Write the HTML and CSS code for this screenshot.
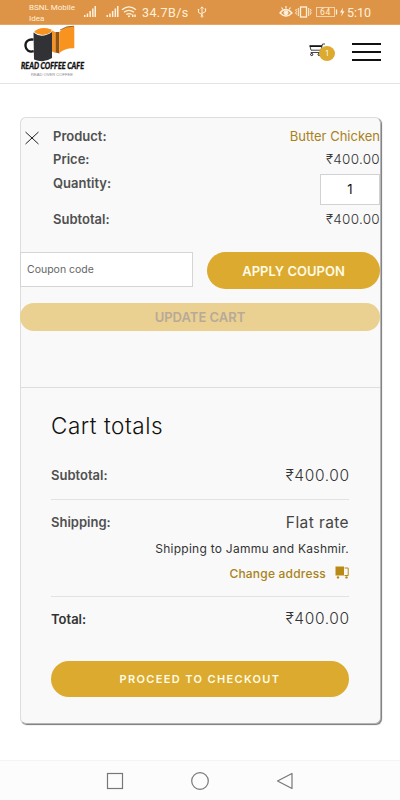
FILE: index.html
```html
<!DOCTYPE html>
<html lang="en">
<head>
<meta charset="utf-8">
<title>Cart – Read Coffee Cafe</title>
<link rel="stylesheet" href="styles.css">
</head>
<body>
<div class="status">
  <div class="carrier">BSNL Mobile<br>Idea</div>
  <svg class="signals" width="54" height="14" viewBox="0 0 54 14" fill="#fff1dc">
    <path d="M0 10h1.500v2H0zM2.700 8.500h1.500v3.500H2.700zM5.400 6h1.500v6H5.400zM8.100 3.500h1.500V12H8.100zM10.500 1h1.500v11h-1.500z"/>
    <path d="M22.500 10H24v2h-1.500zM25.200 8.500h1.500V12h-1.500zM27.900 6h1.500v6h-1.500zM30.600 3.500h1.500V12h-1.500zM33 1h1.500v11H33z"/>
    <g fill="none" stroke="#fff1dc" stroke-width="1.300"><path d="M38 4.800q7-6 14 0M40 7.300q5-4 10 0M42.300 9.600q2.700-2 5.400 0"/></g>
    <circle cx="45" cy="11.300" r="1"/><path d="M48 9.500h1.500V12H48zM50.300 9.500h1.500V12h-1.500z"/>
  </svg>
  <span class="speed">34.7B/s</span>
  <svg class="usb" width="10" height="12" viewBox="0 0 10 12" fill="none" stroke="#fff1dc"><path d="M5 1v9M1.500 4v2.500L5 8.500M8.500 3v2.500L5 7.500M3.500 2.500L5 .8l1.500 1.700"/><circle cx="5" cy="10.300" r=".9"/><path d="M.8 3.500h1.500M7.700 3h1.500"/></svg>
  <svg class="sys" width="66" height="14" viewBox="0 0 66 14" fill="none" stroke="#fff1dc">
    <path d="M1 8q5.500-7 12 0q-6 6-12 0z" stroke-width="1.300"/><circle cx="7" cy="7.800" r="2" fill="#fff1dc"/><path d="M7 1v2.500M2.500 2.500l1.500 2M11.500 2.500l-1.500 2" stroke-width="1.200"/>
    <rect x="21.500" y="2" width="6" height="10" stroke-width="1.300"/><path d="M19.300 3v8M17.500 4l-.8 1.300.8 1.300-.8 1.300.8 1.600M29.700 3v8M31.300 4l.8 1.300-.8 1.300.8 1.300-.8 1.600"/>
    <rect x="37.500" y="2.500" width="18" height="9" stroke="#f6d3a8"/><path d="M57.500 4.500v5" stroke-width="1.300"/>
    <text class="battery" x="41" y="10.400">64</text>
    <path d="M64 2.500l-3 5h2l-.8 4 3.300-5.200h-2z" fill="#fff1dc" stroke="none"/>
  </svg>
  <span class="clock">5:10</span>
</div>
<header class="header">
  <svg class="logo" width="68" height="56" viewBox="0 0 68 56">
    <path d="M32 5.500l3.500 1.700V28L31 26z" fill="#f7931e"/><path d="M35.500 7h3.800v21.500l-3.800-1z" fill="#8f5513"/>
    <path d="M39.300 7Q45 .5 54.300 1.500v21.700q-9-.6-15 4.800z" fill="#f7931e"/><path d="M40 5q6-4.200 14-3.800" fill="none" stroke="#65431d" stroke-width=".7"/>
    <path d="M13.500 14.700c-5-1-8.500 2-8 6.500.3 4 4 6.300 8.200 5" fill="none" stroke="#17191b" stroke-width="2.300"/>
    <path d="M13.500 7.500q8 6.700 18.500-.5v26q-8 5.500-18 1.500z" fill="#303235"/>
    <path d="M14 7Q20 .7 31.500 4.500V7q-9 6-17.500 0z" fill="#f7931e"/>
    <text class="logo-name" x="1" y="44.300" textLength="63" lengthAdjust="spacingAndGlyphs">READ COFFEE CAFE</text>
    <text class="logo-tag" x="11" y="51" textLength="42" lengthAdjust="spacingAndGlyphs">READ OVER COFFEE</text>
  </svg>
  <div class="cart">
    <svg width="17" height="14" viewBox="0 0 17 14" fill="none" stroke="#151515"><path d="M16 1h-2.500l-2 8.500H1.700" stroke-width=".8"/><path d="M13 2.500H.8L2 7.200h10" stroke-width=".8"/><path d="M.8 3.500h12"/><circle cx="2.700" cy="11.500" r="1.100"/><circle cx="10.200" cy="11.500" r="1.100"/></svg>
    <span class="badge">1</span>
  </div>
  <div class="burger"><i></i><i></i><i></i></div>
</header>
<main class="card">
  <section class="item">
    <svg class="remove" width="14" height="14" viewBox="0 0 14 14" stroke="#222" stroke-width="1"><path d="M.5 1l13 12M13.500 1L.5 13"/></svg>
    <dl class="details">
      <div class="line"><dt>Product:</dt><dd class="product">Butter Chicken</dd></div>
      <div class="line"><dt>Price:</dt><dd class="money">₹400.00</dd></div>
      <div class="line qty"><dt>Quantity:</dt><dd class="number">1</dd></div>
      <div class="line"><dt>Subtotal:</dt><dd class="money">₹400.00</dd></div>
    </dl>
  </section>
  <section class="actions">
    <div class="coupon"><div class="field">Coupon code</div><div class="btn apply"><span>APPLY COUPON</span></div></div>
    <div class="btn update"><span>UPDATE CART</span></div>
  </section>
  <section class="totals">
    <h2>Cart totals</h2>
    <div class="sum first"><b>Subtotal:</b><span class="amount">₹400.00</span></div>
    <div class="sum ship">
      <b>Shipping:</b>
      <div class="ship-info">
        <span class="rate">Flat rate</span>
        <span class="dest">Shipping to Jammu and Kashmir.</span>
        <span class="change"><span>Change address</span><svg width="14" height="13" viewBox="0 0 14 13" fill="#b88a14"><path d="M.5.500h8.500v9H.5z"/><path d="M9.500 2h3.700v7.500H9.500" fill="none" stroke="#b88a14"/><circle cx="3" cy="11.400" r="1.200"/><circle cx="11.500" cy="11.400" r="1.200"/></svg></span>
      </div>
    </div>
    <div class="sum last"><b class="dark">Total:</b><span class="amount">₹400.00</span></div>
    <div class="btn checkout"><span>PROCEED TO CHECKOUT</span></div>
  </section>
</main>
<footer class="nav">
  <svg width="18" height="18" viewBox="0 0 18 18"><rect x="1.500" y="1.500" width="15" height="15"/></svg>
  <svg width="18" height="18" viewBox="0 0 18 18"><circle cx="9" cy="9" r="8.300"/></svg>
  <svg width="18" height="18" viewBox="0 0 18 18"><path d="M16 1.500v15L1.500 9z" stroke-linejoin="round"/></svg>
</footer>
</body>
</html>
```
FILE: styles.css
```css
* { box-sizing: border-box; }
body { margin: 0; height: 800px; overflow: hidden; display: flex; flex-direction: column; background: #fff; color: #444; font-family: "Inter", sans-serif; font-size: 13px; white-space: nowrap; }
svg { display: block; flex: none; }
.status { height: 25px; flex: none; display: flex; align-items: center; background: #de9446; color: #fff1dc; font-family: Roboto, sans-serif; padding-left: 29px; border-bottom: 1px solid #e5a768; }
.carrier { width: 55px; font-size: 8px; line-height: 11px; padding-top: 1px; }
.speed { font-size: 12.500px; width: 54px; margin-left: 4px; letter-spacing: .4px; }
.usb { margin-left: 1px; }
.sys { margin-left: 72px; }
.battery { font-size: 8.500px; fill: #fff1dc; stroke: none; letter-spacing: .8px; }
.clock { font-size: 12.500px; margin-left: 2px; }
.header { height: 59px; flex: none; display: flex; align-items: center; padding: 0 19px 0 20px; border-bottom: 1px solid #e3e3e3; }
.logo { align-self: flex-start; overflow: visible; }
.logo-name { font: italic 900 8.500px Lato, sans-serif; fill: #111; stroke: #111; stroke-width: .3px; }
.logo-tag { font: 4px "Liberation Sans", sans-serif; fill: #888; }
.cart { position: relative; margin-left: 221px; padding-bottom: 9px; }
.badge { position: absolute; left: 10px; top: 3px; width: 16px; height: 15px; border-radius: 50%; background: #dcaa2e; color: #fff; font-size: 7px; line-height: 15px; text-align: center; }
.burger { margin-left: auto; margin-bottom: 4px; width: 29px; display: flex; flex-direction: column; gap: 6px; }
.burger i { height: 2px; background: #111; }
.card { width: 361px; height: 607px; flex: none; margin: 33px 0 1px 20px; background: #f9f9f9; border: 1px solid #ddd; border-right-color: #b5b5b5; border-bottom-color: #b5b5b5; box-shadow: 1px 1px 1px #777; border-radius: 6px; }
.item { display: flex; height: 134px; padding: 7px 0 0 4px; }
.remove { margin-top: 6px; }
.details { margin: 0 0 0 14px; flex: 1; }
.line { display: flex; justify-content: space-between; height: 23px; line-height: 23px; }
.line dt, .sum b { font-weight: 600; color: #505050; font-size: 13px; }
.line dd { margin: 0; }
.line.qty { height: 37px; line-height: 24px; }
.product { color: #a98218; }
.money { font-weight: 300; font-size: 13.500px; letter-spacing: .3px; color: #333; }
.line .number { width: 60px; height: 31px; margin-top: 3px; background: #fff; border: 1px solid #d2d2d2; line-height: 29px; text-align: center; color: #111; }
.actions { height: 135px; }
.coupon { display: flex; justify-content: space-between; }
.field { width: 173px; height: 35px; margin-left: -1px; background: #fff; border: 1px solid #d5d5d5; padding-left: 6px; line-height: 33px; font-size: 10.500px; color: #666; }
.btn { display: flex; align-items: center; justify-content: center; border-radius: 20px; background: #dbaa2e; color: #fffbe6; font-weight: 600; }
.apply { width: 173px; height: 37px; font-size: 13px; }
.update { margin: 14px 0 0 -1px; height: 28px; background: #ead091; color: #b8aa98; font-size: 13px; }
.totals { border-top: 1px solid #ddd; border-left: 1px solid #ddd; margin-left: -1px; padding: 0 31px 0 30px; }
h2 { margin: 0; padding-top: 22px; height: 62px; font-size: 22.500px; letter-spacing: .55px; line-height: 32px; font-weight: 300; color: #111; }
.sum { display: flex; justify-content: space-between; border-bottom: 1px solid #e2e2e2; }
.sum.first { height: 50px; line-height: 51px; }
.amount { font-size: 15.500px; letter-spacing: .6px; margin-right: -.6px; font-weight: 300; color: #333; }
.sum.ship { height: 97px; padding-top: 11px; line-height: 23px; }
.ship-info { display: flex; flex-direction: column; align-items: flex-end; }
.rate { font-size: 15.500px; letter-spacing: .4px; line-height: 24px; }
.dest { font-size: 12px; letter-spacing: .26px; line-height: 27px; color: #333; }
.change { display: flex; align-items: center; gap: 9px; font-size: 12px; letter-spacing: .2px; line-height: 23px; font-weight: 500; color: #a98218; }
.change svg { margin-top: -2px; }
.sum.last { height: 64px; line-height: 44px; border: 0; }
.sum .dark { color: #333; }
.checkout { height: 36px; font-size: 11px; letter-spacing: 1.35px; }
.nav { margin-top: auto; height: 40px; flex: none; display: flex; justify-content: center; gap: 67px; align-items: center; background: #fcfcfc; border-top: 1px solid #f4f4f4; }
.nav svg { fill: none; stroke: #777; stroke-width: 1.200px; }
```
